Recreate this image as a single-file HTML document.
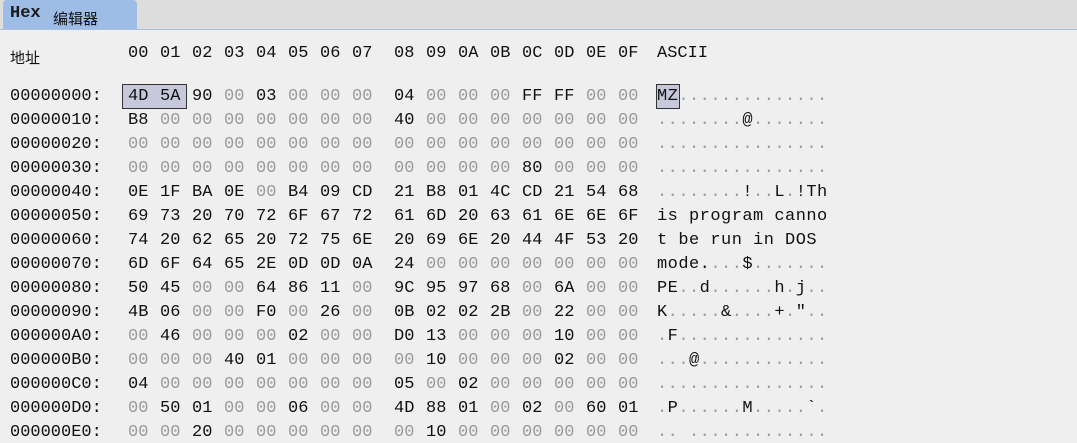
<!DOCTYPE html>
<html><head><meta charset="utf-8"><style>
html,body{margin:0;padding:0}
body{width:1077px;height:437px;overflow:hidden;background:#efefef;position:relative;font-family:"Liberation Mono","DejaVu Sans Mono",monospace;font-size:17px;color:#111}
#top{position:absolute;left:0;top:0;width:1077px;height:29px;background:#dddddd;border-bottom:1px solid #a9bfdc}
#tab{position:absolute;left:3px;top:0;width:134px;height:29px;background:#9dbde6;border-radius:4px 4px 0 0}
#tab .h{position:absolute;left:7px;top:4px;font-size:17px;font-weight:bold;color:#1a1a1a}
#tab .c{position:absolute;left:50px;top:8px;font-family:"Noto Sans CJK SC",sans-serif;font-size:15px;color:#111}
.t{position:absolute;white-space:pre;line-height:20px}
.g{color:#9a9a9a}
.box{position:absolute;background:#c8c8dc;border:1px solid #333}
</style></head><body>
<div id="top"><div id="tab"><span class="h">Hex</span><span class="c">编辑器</span></div></div>
<div class="t" style="left:10px;top:48px;font-family:'Noto Sans CJK SC',sans-serif;font-size:15px">地址</div>
<div class="box" style="left:122px;top:84px;width:63px;height:23px"></div>
<div class="box" style="left:656px;top:84px;width:22px;height:23px"></div>
<div id="c"></div>
<script>
var data=[
"4D 5A 90 00 03 00 00 00 04 00 00 00 FF FF 00 00",
"B8 00 00 00 00 00 00 00 40 00 00 00 00 00 00 00",
"00 00 00 00 00 00 00 00 00 00 00 00 00 00 00 00",
"00 00 00 00 00 00 00 00 00 00 00 00 80 00 00 00",
"0E 1F BA 0E 00 B4 09 CD 21 B8 01 4C CD 21 54 68",
"69 73 20 70 72 6F 67 72 61 6D 20 63 61 6E 6E 6F",
"74 20 62 65 20 72 75 6E 20 69 6E 20 44 4F 53 20",
"6D 6F 64 65 2E 0D 0D 0A 24 00 00 00 00 00 00 00",
"50 45 00 00 64 86 11 00 9C 95 97 68 00 6A 00 00",
"4B 06 00 00 F0 00 26 00 0B 02 02 2B 00 22 00 00",
"00 46 00 00 00 02 00 00 D0 13 00 00 00 10 00 00",
"00 00 00 40 01 00 00 00 00 10 00 00 00 02 00 00",
"04 00 00 00 00 00 00 00 05 00 02 00 00 00 00 00",
"00 50 01 00 00 06 00 00 4D 88 01 00 02 00 60 01",
"00 00 20 00 00 00 00 00 00 10 00 00 00 00 00 00"];
var h="";
function el(x,y,s,cls){h+='<div class="t'+(cls?' '+cls:'')+'" style="left:'+x+'px;top:'+y+'px">'+s+'</div>';}
for(var i=0;i<16;i++){var x=128+i*32+(i>=8?10:0);el(x,44,("0"+i.toString(16).toUpperCase()).slice(-2));}
el(657,44,"ASCII");
for(var r=0;r<data.length;r++){
 var y=87+r*24;
 el(10,y,("0000000"+(r*16).toString(16).toUpperCase()).slice(-8)+":");
 var b=data[r].split(" ");
 for(var i=0;i<16;i++){var x=128+i*32+(i>=8?10:0);el(x,y,b[i],b[i]=="00"?"g":"");
  var v=parseInt(b[i],16);var ch,g=false;
  if(v>=32&&v<127){ch=String.fromCharCode(v);if(ch=="<")ch="&lt;";if(ch=="&")ch="&amp;";}else{ch=".";g=true;}
  el(657+i*10.67,y,ch,g?"g":"");
 }
}
document.getElementById("c").innerHTML=h;
</script>
</body></html>
